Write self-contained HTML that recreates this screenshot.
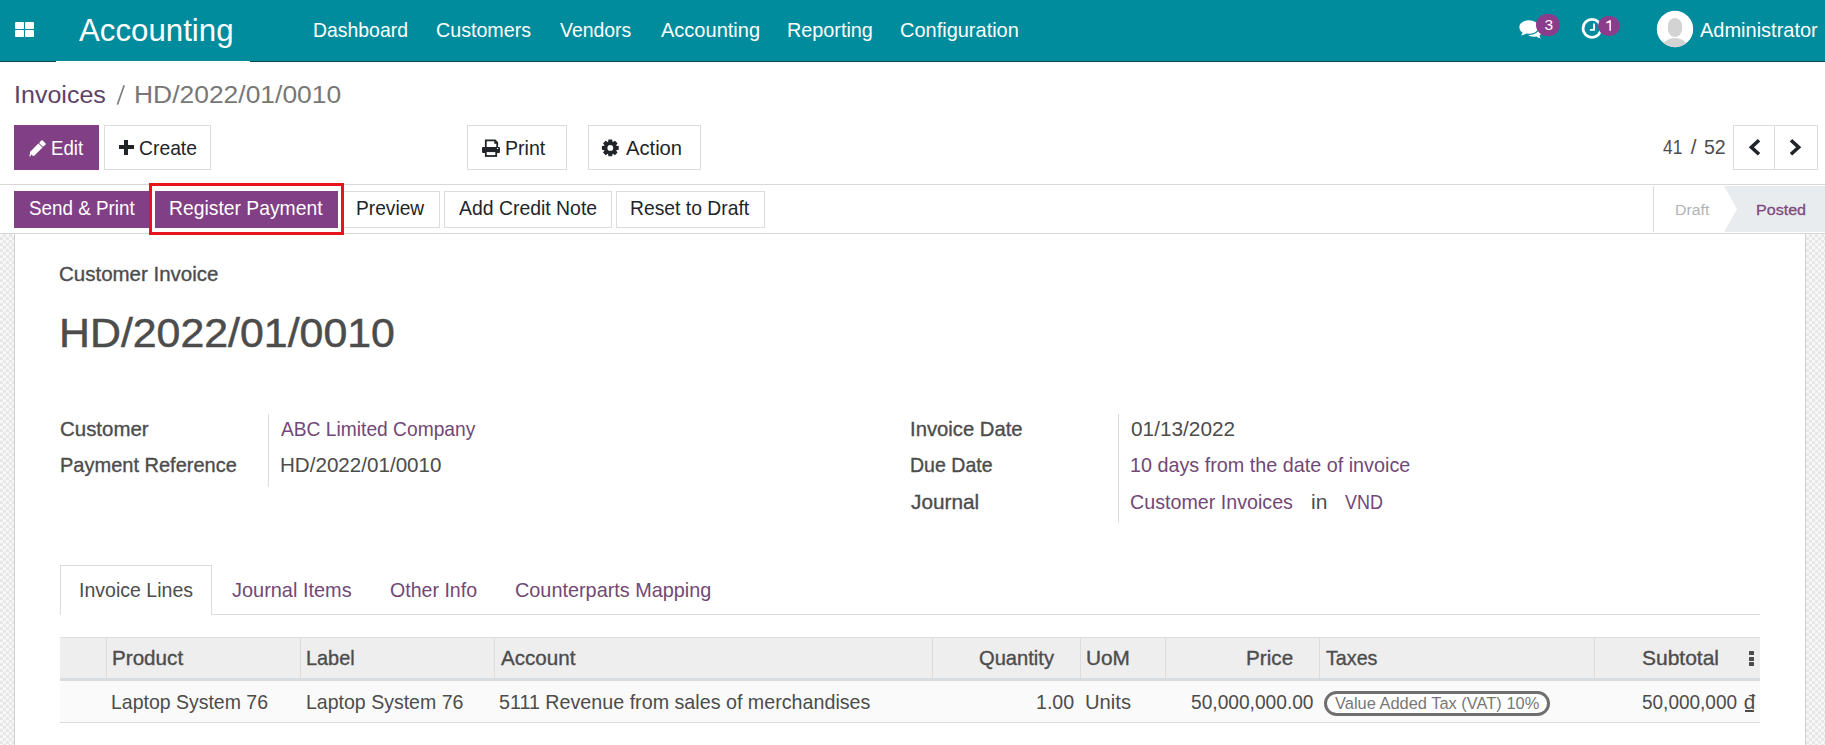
<!DOCTYPE html>
<html><head><meta charset="utf-8"><style>
html,body{margin:0;padding:0;width:1825px;height:745px;overflow:hidden;background:#fff;}
body{position:relative;font-family:"Liberation Sans",sans-serif;}
.t{position:absolute;white-space:pre;transform-origin:0 0;}
.r{position:absolute;display:block;}
</style></head><body>
<div class="r" style="left:0px;top:0px;width:1825px;height:61px;background:#008c9d"></div>
<div class="r" style="left:0px;top:61px;width:56px;height:1px;background:#0b4a52"></div>
<div class="r" style="left:250px;top:61px;width:1575px;height:1px;background:#0b4a52"></div>
<div class="r" style="left:15px;top:22px;width:9px;height:7px;background:#fff;border-radius:1px"></div>
<div class="r" style="left:25px;top:22px;width:9px;height:7px;background:#fff;border-radius:1px"></div>
<div class="r" style="left:15px;top:30px;width:9px;height:7px;background:#fff;border-radius:1px"></div>
<div class="r" style="left:25px;top:30px;width:9px;height:7px;background:#fff;border-radius:1px"></div>
<div class="t" style="left:78.87px;top:12px;font-size:31.00px;line-height:38px;transform:scaleX(1.0073);color:#fff;font-weight:normal;">Accounting</div>
<div class="t" style="left:313.49px;top:17px;font-size:20.67px;line-height:25px;transform:scaleX(0.9395);color:#fff;font-weight:normal;">Dashboard</div>
<div class="t" style="left:436.45px;top:17px;font-size:20.67px;line-height:25px;transform:scaleX(0.9519);color:#fff;font-weight:normal;">Customers</div>
<div class="t" style="left:560.33px;top:17px;font-size:20.67px;line-height:25px;transform:scaleX(0.9403);color:#fff;font-weight:normal;">Vendors</div>
<div class="t" style="left:660.75px;top:17px;font-size:20.67px;line-height:25px;transform:scaleX(0.9691);color:#fff;font-weight:normal;">Accounting</div>
<div class="t" style="left:787.45px;top:17px;font-size:20.67px;line-height:25px;transform:scaleX(0.9588);color:#fff;font-weight:normal;">Reporting</div>
<div class="t" style="left:900.45px;top:17px;font-size:20.67px;line-height:25px;transform:scaleX(0.9672);color:#fff;font-weight:normal;">Configuration</div>
<div class="t" style="left:1699.75px;top:17px;font-size:20.67px;line-height:25px;transform:scaleX(0.9675);color:#fff;font-weight:normal;">Administrator</div>
<svg class="r" style="left:1516px;top:17px" width="28" height="24" viewBox="0 0 28 24">
<path d="M23.6 9.6c1.5 1.2 2.3 2.8 2.3 4.5 0 1.8-.9 3.4-2.5 4.6.3 1 .9 1.9 1.6 2.7-1.7-.3-3.3-1-4.6-1.9-.8.2-1.6.3-2.5.3-2.5 0-4.8-.8-6.3-2 5.9-.2 11-3.3 12-8.2z" fill="#fff"/>
<path d="M13 3.2c5.3 0 9.6 3 9.6 6.8s-4.3 6.8-9.6 6.8c-1 0-2-.1-2.9-.4-1.5 1.1-3.3 1.9-5.3 2.2.8-.9 1.5-1.9 1.8-3.1C4.3 14.3 3.4 12.3 3.4 10 3.4 6.2 7.7 3.2 13 3.2z" fill="#fff" stroke="#008c9d" stroke-width="2.4" paint-order="stroke"/>
</svg>
<div class="r" style="left:1536px;top:14px;width:24px;height:22px;background:#8b3d8b;border-radius:11px"></div>
<div class="t" style="left:1544.49px;top:15px;font-size:15.50px;line-height:19px;transform:scaleX(1.0000);color:#fff;font-weight:normal;">3</div>
<svg class="r" style="left:1580px;top:16px" width="26" height="26" viewBox="0 0 26 26">
<circle cx="12" cy="12.4" r="9" fill="none" stroke="#fff" stroke-width="2.8"/>
<path d="M14 7.6V13.9H9.9" fill="none" stroke="#fff" stroke-width="1.9"/>
</svg>
<div class="r" style="left:1598px;top:16px;width:22px;height:20px;background:#8b3d8b;border-radius:11px"></div>
<svg class="r" style="left:1599.5px;top:15.5px" width="20" height="20" viewBox="0 0 20 20"><path d="M9.5 4.3 H10.9 V14.7 H9.4 V6.5 L6.4 7.5 V6.1 Z" fill="#fff"/></svg>
<svg class="r" style="left:1656px;top:10px" width="38" height="38" viewBox="0 0 38 38">
<defs><clipPath id="av"><circle cx="19" cy="19" r="18.2"/></clipPath></defs>
<circle cx="19" cy="19" r="18.2" fill="#fff"/>
<g clip-path="url(#av)" fill="#d3d3d3">
<rect x="12" y="8" width="14" height="19" rx="7" ry="7.5"/>
<ellipse cx="19" cy="40" rx="14" ry="12"/>
</g></svg>
<div class="t" style="left:14.27px;top:80px;font-size:24.80px;line-height:30px;transform:scaleX(1.0098);color:#5e4266;font-weight:normal;">Invoices</div>
<svg class="r" style="left:110px;top:80px" width="20" height="30" viewBox="0 0 20 30"><path d="M7.4 24.6 L14.2 5.2" stroke="#808080" stroke-width="1.7"/></svg>
<div class="t" style="left:133.85px;top:80px;font-size:24.80px;line-height:30px;transform:scaleX(1.0657);color:#777;font-weight:normal;">HD/2022/01/0010</div>
<div class="r" style="left:14px;top:125px;width:85px;height:45px;background:#813f85"></div>
<div class="r" style="left:104px;top:125px;width:107px;height:45px;background:#fff;border:1px solid #dcdcdc;box-sizing:border-box"></div>
<div class="r" style="left:467px;top:125px;width:100px;height:45px;background:#fff;border:1px solid #dcdcdc;box-sizing:border-box"></div>
<div class="r" style="left:588px;top:125px;width:113px;height:45px;background:#fff;border:1px solid #dcdcdc;box-sizing:border-box"></div>
<div class="t" style="left:50.99px;top:135px;font-size:20.67px;line-height:25px;transform:scaleX(0.9034);color:#fff;font-weight:normal;">Edit</div>
<div class="t" style="left:138.99px;top:135px;font-size:20.67px;line-height:25px;transform:scaleX(0.9352);color:#212529;font-weight:normal;">Create</div>
<div class="t" style="left:505.11px;top:135px;font-size:20.67px;line-height:25px;transform:scaleX(0.9473);color:#212529;font-weight:normal;">Print</div>
<div class="t" style="left:625.71px;top:135px;font-size:20.67px;line-height:25px;transform:scaleX(0.9765);color:#212529;font-weight:normal;">Action</div>
<svg class="r" style="left:26px;top:137px" width="22" height="22" viewBox="0 0 22 22">
<g transform="translate(3.4 19.6) rotate(-45)">
<path d="M0 0 L4 -2.9 H15.6 V2.9 H4 Z" fill="#fff"/>
<rect x="16.4" y="-2.9" width="4.4" height="5.8" rx="1" fill="#fff"/>
<circle cx="2.2" cy="0.9" r="0.9" fill="#6a3570"/>
</g></svg>
<div class="r" style="left:119px;top:145px;width:15px;height:4px;background:#212529"></div>
<div class="r" style="left:124px;top:140px;width:4px;height:15px;background:#212529"></div>
<svg class="r" style="left:480px;top:138px" width="22" height="20" viewBox="0 0 22 20">
<path d="M5.8 9.2V2.4h9.2l2.2 2.2v4.6" fill="none" stroke="#212529" stroke-width="1.8"/>
<path d="M15 2.4v2.6h2.6" fill="#212529" stroke="#212529" stroke-width="1.4"/>
<rect x="2" y="9" width="18" height="6" rx="1" fill="#212529"/>
<rect x="5.8" y="13.2" width="10.4" height="4.8" fill="#fff" stroke="#212529" stroke-width="1.8"/>
<circle cx="17.6" cy="10.4" r=".7" fill="#fff"/>
</svg>
<svg class="r" style="left:598px;top:136px" width="24" height="24" viewBox="0 0 24 24"><path fill-rule="evenodd" d="M18.29 9.65 L20.70 10.06 L20.70 13.74 L18.29 14.15 L18.13 14.54 L19.54 16.54 L16.94 19.14 L14.94 17.73 L14.55 17.89 L14.14 20.30 L10.46 20.30 L10.05 17.89 L9.66 17.73 L7.66 19.14 L5.06 16.54 L6.47 14.54 L6.31 14.15 L3.90 13.74 L3.90 10.06 L6.31 9.65 L6.47 9.26 L5.06 7.26 L7.66 4.66 L9.66 6.07 L10.05 5.91 L10.46 3.50 L14.14 3.50 L14.55 5.91 L14.94 6.07 L16.94 4.66 L19.54 7.26 L18.13 9.26 Z M15.20 11.90 A2.9 2.9 0 1 0 9.40 11.90 A2.9 2.9 0 1 0 15.20 11.90 Z" fill="#212529"/></svg>
<div class="t" style="left:1663.41px;top:134px;font-size:20.67px;line-height:25px;transform:scaleX(0.8392);color:#4c4c4c;font-weight:normal;">41</div>
<div class="t" style="left:1690.79px;top:134px;font-size:20.67px;line-height:25px;transform:scaleX(1.0000);color:#4c4c4c;font-weight:normal;">/</div>
<div class="t" style="left:1704.03px;top:134px;font-size:20.67px;line-height:25px;transform:scaleX(0.9454);color:#4c4c4c;font-weight:normal;">52</div>
<div class="r" style="left:1733px;top:125px;width:85px;height:45px;background:#fff;border:1px solid #dcdcdc;box-sizing:border-box"></div>
<div class="r" style="left:1774px;top:125px;width:1px;height:45px;background:#dcdcdc"></div>
<svg class="r" style="left:1740px;top:132px" width="70" height="30" viewBox="0 0 70 30">
<path d="M19 8.3 L11.4 15.3 L19 22.3" fill="none" stroke="#212529" stroke-width="3.6" stroke-linecap="butt"/>
<path d="M51 8.3 L58.6 15.3 L51 22.3" fill="none" stroke="#212529" stroke-width="3.6"/>
</svg>
<div class="r" style="left:0px;top:184px;width:1825px;height:1px;background:#d8d8d8"></div>
<div class="r" style="left:0px;top:233px;width:1825px;height:1px;background:#d8d8d8"></div>
<div class="r" style="left:14px;top:191px;width:135px;height:37px;background:#813f85"></div>
<div class="r" style="left:343px;top:191px;width:97px;height:37px;background:#fff;border:1px solid #dcdcdc;box-sizing:border-box"></div>
<div class="r" style="left:444px;top:191px;width:168px;height:37px;background:#fff;border:1px solid #dcdcdc;box-sizing:border-box"></div>
<div class="r" style="left:616px;top:191px;width:149px;height:37px;background:#fff;border:1px solid #dcdcdc;box-sizing:border-box"></div>
<div class="r" style="left:149px;top:183px;width:195px;height:52px;border:3px solid #e8141c;box-sizing:border-box;background:#fff"></div>
<div class="r" style="left:155px;top:191px;width:183px;height:37px;background:#813f85"></div>
<div class="t" style="left:28.57px;top:195px;font-size:20.67px;line-height:25px;transform:scaleX(0.9119);color:#fff;font-weight:normal;">Send & Print</div>
<div class="t" style="left:169.45px;top:195px;font-size:20.67px;line-height:25px;transform:scaleX(0.9352);color:#fff;font-weight:normal;">Register Payment</div>
<div class="t" style="left:356.07px;top:195px;font-size:20.67px;line-height:25px;transform:scaleX(0.9277);color:#212529;font-weight:normal;">Preview</div>
<div class="t" style="left:459.33px;top:195px;font-size:20.67px;line-height:25px;transform:scaleX(0.9397);color:#212529;font-weight:normal;">Add Credit Note</div>
<div class="t" style="left:630.11px;top:195px;font-size:20.67px;line-height:25px;transform:scaleX(0.9351);color:#212529;font-weight:normal;">Reset to Draft</div>
<div class="r" style="left:1653px;top:186px;width:1px;height:46px;background:#dcdcdc"></div>
<svg class="r" style="left:1724px;top:185px" width="101" height="48" viewBox="0 0 101 48"><path d="M0 1 H101 V47 H0 L13 24 Z" fill="#e9ecef"/></svg>
<div class="t" style="left:1675.07px;top:200px;font-size:15.50px;line-height:19px;transform:scaleX(1.0214);color:#b0b3b6;font-weight:normal;">Draft</div>
<div class="t" style="left:1755.57px;top:200px;font-size:15.50px;line-height:19px;transform:scaleX(1.0374);color:#7c4a80;font-weight:normal;-webkit-text-stroke:0.3px #7c4a80;">Posted</div>
<div class="r" style="left:0px;top:234px;width:14px;height:511px;background:repeating-conic-gradient(#e7e7e7 0 25%, #f7f7f7 0 50%) 0 0/6px 6px"></div>
<div class="r" style="left:1806px;top:234px;width:19px;height:511px;background:repeating-conic-gradient(#e7e7e7 0 25%, #f7f7f7 0 50%) 0 0/6px 6px"></div>
<div class="r" style="left:14px;top:234px;width:1px;height:511px;background:#cfcfcf"></div>
<div class="r" style="left:1805px;top:234px;width:1px;height:511px;background:#cfcfcf"></div>
<div class="t" style="left:59.15px;top:261px;font-size:20.67px;line-height:25px;transform:scaleX(0.9920);color:#4c4c4c;font-weight:normal;-webkit-text-stroke:0.35px #4c4c4c;">Customer Invoice</div>
<div class="t" style="left:58.59px;top:308px;font-size:41.34px;line-height:50px;transform:scaleX(1.0368);color:#4c4c4c;font-weight:normal;-webkit-text-stroke:0.5px #4c4c4c;">HD/2022/01/0010</div>
<div class="t" style="left:59.99px;top:416px;font-size:20.67px;line-height:25px;transform:scaleX(0.9894);color:#4c4c4c;font-weight:normal;-webkit-text-stroke:0.35px #4c4c4c;">Customer</div>
<div class="t" style="left:59.99px;top:452px;font-size:20.67px;line-height:25px;transform:scaleX(0.9689);color:#4c4c4c;font-weight:normal;-webkit-text-stroke:0.35px #4c4c4c;">Payment Reference</div>
<div class="r" style="left:268px;top:414px;width:1px;height:73px;background:#dcdcdc"></div>
<div class="t" style="left:281.29px;top:416px;font-size:20.67px;line-height:25px;transform:scaleX(0.9298);color:#724876;font-weight:normal;">ABC Limited Company</div>
<div class="t" style="left:280.49px;top:452px;font-size:20.67px;line-height:25px;transform:scaleX(0.9970);color:#4c4c4c;font-weight:normal;">HD/2022/01/0010</div>
<div class="t" style="left:909.99px;top:416px;font-size:20.67px;line-height:25px;transform:scaleX(0.9802);color:#4c4c4c;font-weight:normal;-webkit-text-stroke:0.35px #4c4c4c;">Invoice Date</div>
<div class="t" style="left:909.99px;top:452px;font-size:20.67px;line-height:25px;transform:scaleX(0.9458);color:#4c4c4c;font-weight:normal;-webkit-text-stroke:0.35px #4c4c4c;">Due Date</div>
<div class="t" style="left:910.79px;top:489px;font-size:20.67px;line-height:25px;transform:scaleX(1.0052);color:#4c4c4c;font-weight:normal;-webkit-text-stroke:0.35px #4c4c4c;">Journal</div>
<div class="r" style="left:1118px;top:414px;width:1px;height:109px;background:#dcdcdc"></div>
<div class="t" style="left:1130.87px;top:416px;font-size:20.67px;line-height:25px;transform:scaleX(1.0076);color:#4c4c4c;font-weight:normal;">01/13/2022</div>
<div class="t" style="left:1130.07px;top:452px;font-size:20.67px;line-height:25px;transform:scaleX(0.9572);color:#724876;font-weight:normal;">10 days from the date of invoice</div>
<div class="t" style="left:1130.45px;top:489px;font-size:20.67px;line-height:25px;transform:scaleX(0.9524);color:#724876;font-weight:normal;">Customer Invoices</div>
<div class="t" style="left:1310.57px;top:489px;font-size:20.67px;line-height:25px;transform:scaleX(1.0184);color:#4c4c4c;font-weight:normal;">in</div>
<div class="t" style="left:1345.37px;top:489px;font-size:20.67px;line-height:25px;transform:scaleX(0.8684);color:#724876;font-weight:normal;">VND</div>
<div class="r" style="left:60px;top:614px;width:1700px;height:1px;background:#dcdcdc"></div>
<div class="r" style="left:60px;top:565px;width:152px;height:50px;background:#fff;border:1px solid #dcdcdc;border-bottom:none;box-sizing:border-box"></div>
<div class="t" style="left:78.57px;top:577px;font-size:20.67px;line-height:25px;transform:scaleX(0.9457);color:#4c4c4c;font-weight:normal;">Invoice Lines</div>
<div class="t" style="left:231.75px;top:577px;font-size:20.67px;line-height:25px;transform:scaleX(0.9652);color:#724876;font-weight:normal;">Journal Items</div>
<div class="t" style="left:389.53px;top:577px;font-size:20.67px;line-height:25px;transform:scaleX(0.9475);color:#724876;font-weight:normal;">Other Info</div>
<div class="t" style="left:514.99px;top:577px;font-size:20.67px;line-height:25px;transform:scaleX(0.9607);color:#724876;font-weight:normal;">Counterparts Mapping</div>
<div class="r" style="left:60px;top:637px;width:1700px;height:41px;background:#eeeeee;border-top:1px solid #dddddd;box-sizing:border-box"></div>
<div class="r" style="left:60px;top:678px;width:1700px;height:3px;background:#dadde0"></div>
<div class="r" style="left:60px;top:681px;width:1700px;height:41px;background:#fafafa"></div>
<div class="r" style="left:60px;top:722px;width:1700px;height:1px;background:#dcdcdc"></div>
<div class="r" style="left:106px;top:638px;width:1px;height:41px;background:#dcdcdc"></div>
<div class="r" style="left:300px;top:638px;width:1px;height:41px;background:#dcdcdc"></div>
<div class="r" style="left:494px;top:638px;width:1px;height:41px;background:#dcdcdc"></div>
<div class="r" style="left:932px;top:638px;width:1px;height:41px;background:#dcdcdc"></div>
<div class="r" style="left:1080px;top:638px;width:1px;height:41px;background:#dcdcdc"></div>
<div class="r" style="left:1165px;top:638px;width:1px;height:41px;background:#dcdcdc"></div>
<div class="r" style="left:1319px;top:638px;width:1px;height:41px;background:#dcdcdc"></div>
<div class="r" style="left:1594px;top:638px;width:1px;height:41px;background:#dcdcdc"></div>
<div class="t" style="left:112.07px;top:645px;font-size:20.67px;line-height:25px;transform:scaleX(0.9990);color:#4c4c4c;font-weight:normal;-webkit-text-stroke:0.35px #4c4c4c;">Product</div>
<div class="t" style="left:306.15px;top:645px;font-size:20.67px;line-height:25px;transform:scaleX(0.9614);color:#4c4c4c;font-weight:normal;-webkit-text-stroke:0.35px #4c4c4c;">Label</div>
<div class="t" style="left:500.87px;top:645px;font-size:20.67px;line-height:25px;transform:scaleX(0.9973);color:#4c4c4c;font-weight:normal;-webkit-text-stroke:0.35px #4c4c4c;">Account</div>
<div class="t" style="left:978.79px;top:645px;font-size:20.67px;line-height:25px;transform:scaleX(0.9744);color:#4c4c4c;font-weight:normal;-webkit-text-stroke:0.35px #4c4c4c;">Quantity</div>
<div class="t" style="left:1085.61px;top:645px;font-size:20.67px;line-height:25px;transform:scaleX(1.0064);color:#4c4c4c;font-weight:normal;-webkit-text-stroke:0.35px #4c4c4c;">UoM</div>
<div class="t" style="left:1246.11px;top:645px;font-size:20.67px;line-height:25px;transform:scaleX(1.0024);color:#4c4c4c;font-weight:normal;-webkit-text-stroke:0.35px #4c4c4c;">Price</div>
<div class="t" style="left:1326.33px;top:645px;font-size:20.67px;line-height:25px;transform:scaleX(0.9533);color:#4c4c4c;font-weight:normal;-webkit-text-stroke:0.35px #4c4c4c;">Taxes</div>
<div class="t" style="left:1642.45px;top:645px;font-size:20.67px;line-height:25px;transform:scaleX(1.0158);color:#4c4c4c;font-weight:normal;-webkit-text-stroke:0.35px #4c4c4c;">Subtotal</div>
<div class="r" style="left:1749px;top:651px;width:4.5px;height:4px;background:#4c4c4c;border-radius:.5px"></div>
<div class="r" style="left:1749px;top:656.5px;width:4.5px;height:4px;background:#4c4c4c;border-radius:.5px"></div>
<div class="r" style="left:1749px;top:662px;width:4.5px;height:4px;background:#4c4c4c;border-radius:.5px"></div>
<div class="t" style="left:111.11px;top:689px;font-size:20.67px;line-height:25px;transform:scaleX(0.9430);color:#4c4c4c;font-weight:normal;">Laptop System 76</div>
<div class="t" style="left:305.53px;top:689px;font-size:20.67px;line-height:25px;transform:scaleX(0.9450);color:#4c4c4c;font-weight:normal;">Laptop System 76</div>
<div class="t" style="left:499.45px;top:689px;font-size:20.67px;line-height:25px;transform:scaleX(0.9533);color:#4c4c4c;font-weight:normal;">5111 Revenue from sales of merchandises</div>
<div class="t" style="left:1036.45px;top:689px;font-size:20.67px;line-height:25px;transform:scaleX(0.9478);color:#4c4c4c;font-weight:normal;">1.00</div>
<div class="t" style="left:1085.45px;top:689px;font-size:20.67px;line-height:25px;transform:scaleX(0.9774);color:#4c4c4c;font-weight:normal;">Units</div>
<div class="t" style="left:1190.53px;top:689px;font-size:20.67px;line-height:25px;transform:scaleX(0.9274);color:#4c4c4c;font-weight:normal;">50,000,000.00</div>
<div class="r" style="left:1324px;top:691px;width:226px;height:25px;border:3px solid #6f6f6f;border-radius:13px;box-sizing:border-box;background:#fff"></div>
<div class="t" style="left:1335.33px;top:693px;font-size:16.02px;line-height:20px;transform:scaleX(1.0258);color:#777;font-weight:normal;">Value Added Tax (VAT) 10%</div>
<div class="t" style="left:1642.15px;top:689px;font-size:20.67px;line-height:25px;transform:scaleX(0.9192);color:#4c4c4c;font-weight:normal;">50,000,000</div>
<div class="t" style="left:1743.87px;top:689px;font-size:20.67px;line-height:25px;transform:scaleX(1.0000);color:#4c4c4c;font-weight:normal;">đ</div>
<div class="r" style="left:1745px;top:710px;width:9px;height:2px;background:#4c4c4c"></div>
</body></html>
